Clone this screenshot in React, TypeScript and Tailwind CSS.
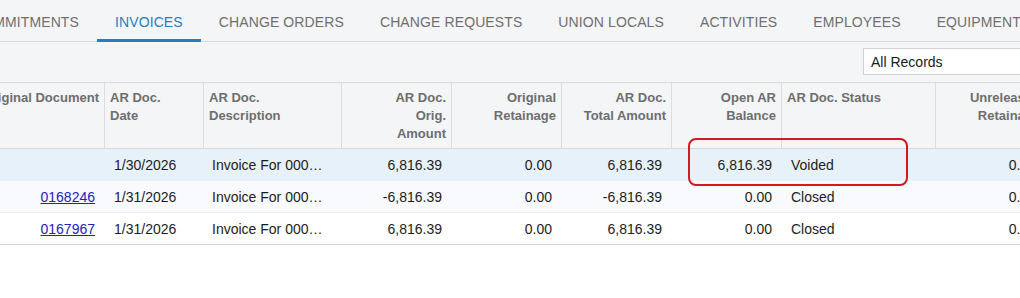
import React from 'react';

const TABS = ['COMMITMENTS', 'INVOICES', 'CHANGE ORDERS', 'CHANGE REQUESTS', 'UNION LOCALS', 'ACTIVITIES', 'EMPLOYEES', 'EQUIPMENT', 'PROJECT TASKS'];

type Col = { label: React.ReactNode; align: 'left' | 'right' };

const COLUMNS: Col[] = [
    { label: 'Original Document', align: 'right' },
    { label: <>AR Doc.<br />Date</>, align: 'left' },
    { label: <>AR Doc.<br />Description</>, align: 'left' },
    { label: <>AR Doc.<br />Orig.<br />Amount</>, align: 'right' },
    { label: <>Original<br />Retainage</>, align: 'right' },
    { label: <>AR Doc.<br />Total Amount</>, align: 'right' },
    { label: <>Open AR<br />Balance</>, align: 'right' },
    { label: 'AR Doc. Status', align: 'left' },
    { label: <>Unreleased<br />Retainage</>, align: 'right' },
];

const ROWS = [
    { doc: '', date: '1/30/2026', desc: 'Invoice For 0001245 - Phase 2', orig: '6,816.39', ret: '0.00', total: '6,816.39', open: '6,816.39', status: 'Voided', unrel: '0.00', bg: 'bg-[#e7f1fa]' },
    { doc: '0168246', date: '1/31/2026', desc: 'Invoice For 0001245 - Phase 2', orig: '-6,816.39', ret: '0.00', total: '-6,816.39', open: '0.00', status: 'Closed', unrel: '0.00', bg: 'bg-[#f8fafd]' },
    { doc: '0167967', date: '1/31/2026', desc: 'Invoice For 0001245 - Phase 2', orig: '6,816.39', ret: '0.00', total: '6,816.39', open: '0.00', status: 'Closed', unrel: '0.00', bg: 'bg-white' },
];

const GRID = 'grid grid-cols-[140px_99px_138px_110px_110px_110px_110px_154px_110px]';

export default function App() {
    return (
        <div className="relative w-[1020px] h-[298px] overflow-hidden bg-white font-['Liberation_Sans',Arial,sans-serif]">
            {/* Tabs */}
            <div className="h-[42px] bg-[#f4f5f7] border-b border-[#d9dadc] flex">
                <div className="flex -ml-[46px] shrink-0">
                    {TABS.map((tab) => (
                        <div
                            key={tab}
                            className={`h-[42px] -mb-px px-[18px] pt-[5px] flex items-center border-b-[3px] text-[14px] tracking-[0.11px] whitespace-nowrap ${tab === 'INVOICES'
                                ? 'border-[#2a7cc1] text-[#2b7cc2]'
                                : 'border-transparent text-[#6f6f6f]'
                                }`}
                        >
                            {tab}
                        </div>
                    ))}
                </div>
            </div>

            {/* Toolbar */}
            <div className="h-[40px] bg-[#f4f5f7] flex pt-[6px]">
                <div className="ml-auto -mr-[43px] w-[200px] shrink-0 h-[27px] bg-white border border-[#cfd1d4] flex items-center px-[7px] pt-[1px] text-[14px] text-[#1a1a1a]">
                    All Records
                </div>
            </div>

            {/* Grid */}
            <div className="-ml-[36px] w-[1081px]">
                <div className={`${GRID} h-[67px] bg-[#f4f5f7] border-t border-b border-[#d9dadc]`}>
                    {COLUMNS.map((col, i) => (
                        <div
                            key={i}
                            className={`px-[5px] pt-[6px] text-[13px] leading-[18px] font-bold text-[#6e6e6e] whitespace-nowrap overflow-hidden ${i > 0 ? 'border-l border-[#dcdddf]' : ''} ${col.align === 'right' ? 'text-right' : 'text-left'}`}
                        >
                            {col.label}
                        </div>
                    ))}
                </div>
                {ROWS.map((row, i) => (
                    <div
                        key={i}
                        className={`${GRID} h-[32px] pt-[2px] text-[14px] text-[#1d1d1d] border-b ${i === ROWS.length - 1 ? 'border-[#d5d6d8]' : 'border-[#eceef1]'} ${row.bg}`}
                    >
                        <div className="px-[9px] flex items-center justify-end">
                            {row.doc && <span className="text-[#2323b8] underline">{row.doc}</span>}
                        </div>
                        <div className="px-[10px] flex items-center">{row.date}</div>
                        <div className="pl-[9px] pr-[14px] flex items-center min-w-0 overflow-hidden">
                            <span className="truncate">{row.desc}</span>
                        </div>
                        <div className="px-[9px] flex items-center justify-end">{row.orig}</div>
                        <div className="px-[9px] flex items-center justify-end">{row.ret}</div>
                        <div className="px-[9px] flex items-center justify-end">{row.total}</div>
                        <div className="px-[9px] flex items-center justify-end">{row.open}</div>
                        <div className="px-[10px] flex items-center">{row.status}</div>
                        <div className="px-[9px] flex items-center justify-end">{row.unrel}</div>
                    </div>
                ))}
            </div>

            {/* Annotation box */}
            <div className="absolute left-[688px] top-[138px] w-[220px] h-[48px] border-2 border-[#cc1b24] rounded-[8px] pointer-events-none" />
        </div>
    );
}
